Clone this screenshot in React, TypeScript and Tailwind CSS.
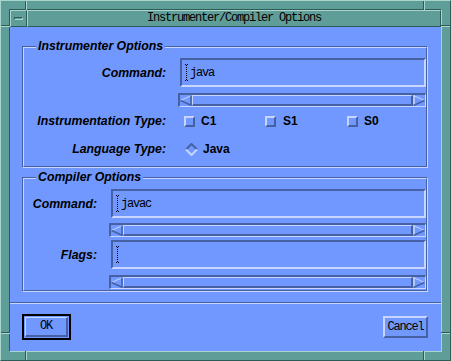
import React from 'react';

const label = "font-['Liberation_Sans',Arial,sans-serif] font-bold italic text-[12.3px] leading-[14px] text-black text-right";
const mono = "font-['Liberation_Mono','DejaVu_Sans_Mono',monospace] text-[12px] tracking-[-1.2px] text-black";
const optText = "font-['Liberation_Sans',Arial,sans-serif] font-bold text-[12px] leading-[14px] text-black";

function Cursor() {
  const dots: [number, number][] = [[1, 0], [3, 0], [2, 1]];
  for (let y = 3; y <= 13; y += 2) dots.push([2, y]);
  dots.push([2, 15], [1, 16], [3, 16]);
  return (
    <svg width="5" height="17" className="shrink-0">
      {dots.map(([x, y], i) => (
        <rect key={i} x={x} y={y} width="1" height="1" fill="#000" />
      ))}
    </svg>
  );
}

function Field({ text }: { text?: string }) {
  return (
    <div className="flex-1 h-[29px] flex items-center pl-[2px] border-2 border-t-[#4561a3] border-l-[#4561a3] border-b-[#c8d6ff] border-r-[#c8d6ff]">
      <Cursor />
      {text ? <span className={`${mono} ml-[1px] leading-[14px]`}>{text}</span> : null}
    </div>
  );
}

function ArrowLeft() {
  return (
    <svg width="12" height="11" className="shrink-0">
      <polygon points="0.5,5.5 11.5,0.5 11.5,10.5" fill="#7098ff" />
      <line x1="0.5" y1="5.5" x2="11.5" y2="0.5" stroke="#c8d6ff" strokeWidth="1" />
      <line x1="0.5" y1="5.5" x2="11.5" y2="10.5" stroke="#4561a3" strokeWidth="1.5" />
      <line x1="11" y1="0.5" x2="11" y2="10.5" stroke="#4561a3" strokeWidth="1.5" />
    </svg>
  );
}

function ArrowRight() {
  return (
    <svg width="12" height="11" className="shrink-0">
      <polygon points="0.5,0.5 11.5,5.5 0.5,10.5" fill="#7098ff" />
      <line x1="0.5" y1="0.5" x2="11.5" y2="5.5" stroke="#c8d6ff" strokeWidth="1" />
      <line x1="1" y1="0.5" x2="1" y2="10.5" stroke="#c8d6ff" strokeWidth="1.5" />
      <line x1="0.5" y1="10.5" x2="11.5" y2="5.5" stroke="#4561a3" strokeWidth="1.5" />
    </svg>
  );
}

function Scrollbar({ className }: { className: string }) {
  return (
    <div className={`h-[14px] flex items-stretch border-t-2 border-l-2 border-b border-r border-t-[#4561a3] border-l-[#4561a3] border-b-[#c8d6ff] border-r-[#c8d6ff] ${className}`}>
      <div className="flex items-center"><ArrowLeft /></div>
      <div className="flex-1 border-t border-l border-b-2 border-r-2 border-t-[#c8d6ff] border-l-[#c8d6ff] border-b-[#4561a3] border-r-[#4561a3]" />
      <div className="flex items-center"><ArrowRight /></div>
    </div>
  );
}

function CheckBox() {
  return (
    <div className="w-[11px] h-[11px] shrink-0 border-2 border-t-[#c8d6ff] border-l-[#c8d6ff] border-b-[#4561a3] border-r-[#4561a3] bg-[#7098ff]" />
  );
}

function Diamond() {
  return (
    <svg width="13" height="13" className="shrink-0">
      <polygon points="6.5,1 12,6.5 6.5,12 1,6.5" fill="#7098ff" />
      <polyline points="1,6.5 6.5,1 12,6.5" fill="none" stroke="#4561a3" strokeWidth="2" />
      <polyline points="1,6.5 6.5,12 12,6.5" fill="none" stroke="#c8d6ff" strokeWidth="2" />
    </svg>
  );
}

function Frame({ title, h, children }: { title: string; h: string; children: React.ReactNode }) {
  return (
    <div className={`relative ${h} border border-t-[#4561a3] border-l-[#4561a3] border-b-[#c8d6ff] border-r-[#c8d6ff]`}>
      <div className="h-full flex flex-col border border-t-[#c8d6ff] border-l-[#c8d6ff] border-b-[#4561a3] border-r-[#4561a3]">
        {children}
      </div>
      <span className={`absolute top-[-8px] left-[13px] px-[2px] bg-[#7098ff] ${label} text-left`}>{title}</span>
    </div>
  );
}

function Sep({ className }: { className: string }) {
  return <span className={`absolute ${className}`} />;
}

export default function App() {
  return (
    <div className="relative w-[451px] h-[361px] bg-[#5f9e98] border-t border-l border-b border-r border-t-[#a9d5cd] border-l-[#a9d5cd] border-b-[#2f5c57] border-r-[#2f5c57] p-[8px]">
      {/* resize corner separators */}
      <Sep className="left-[24px] top-0 w-[1px] h-[9px] bg-[#2f5c57]" />
      <Sep className="left-[25px] top-0 w-[1px] h-[9px] bg-[#a9d5cd]" />
      <Sep className="left-0 top-[24px] w-[9px] h-[1px] bg-[#2f5c57]" />
      <Sep className="left-0 top-[25px] w-[9px] h-[1px] bg-[#a9d5cd]" />
      <Sep className="left-[422px] top-0 w-[1px] h-[9px] bg-[#2f5c57]" />
      <Sep className="left-[423px] top-0 w-[1px] h-[9px] bg-[#a9d5cd]" />
      <Sep className="right-0 top-[24px] w-[9px] h-[1px] bg-[#2f5c57]" />
      <Sep className="right-0 top-[25px] w-[9px] h-[1px] bg-[#a9d5cd]" />
      <Sep className="left-0 top-[331px] w-[9px] h-[1px] bg-[#2f5c57]" />
      <Sep className="left-0 top-[332px] w-[9px] h-[1px] bg-[#a9d5cd]" />
      <Sep className="right-0 top-[331px] w-[9px] h-[1px] bg-[#2f5c57]" />
      <Sep className="right-0 top-[332px] w-[9px] h-[1px] bg-[#a9d5cd]" />
      <Sep className="left-[24px] bottom-0 w-[1px] h-[9px] bg-[#2f5c57]" />
      <Sep className="left-[25px] bottom-0 w-[1px] h-[9px] bg-[#a9d5cd]" />
      <Sep className="left-[422px] bottom-0 w-[1px] h-[9px] bg-[#2f5c57]" />
      <Sep className="left-[423px] bottom-0 w-[1px] h-[9px] bg-[#a9d5cd]" />

      <div className="h-full flex flex-col border border-t-[#2f5c57] border-l-[#2f5c57] border-b-[#a9d5cd] border-r-[#a9d5cd]">
        {/* title bar */}
        <div className="flex h-[17px] shrink-0">
          <div className="w-[17px] h-[17px] flex items-center justify-center border border-t-[#a9d5cd] border-l-[#a9d5cd] border-b-[#2f5c57] border-r-[#2f5c57]">
            <div className="w-[9px] h-[3px] border border-t-[#2f5c57] border-l-[#2f5c57] border-b-[#a9d5cd] border-r-[#a9d5cd]" />
          </div>
          <div className="flex-1 flex items-center justify-center border border-t-[#a9d5cd] border-l-[#a9d5cd] border-b-[#2f5c57] border-r-[#2f5c57]">
            <span className={`${mono} leading-[13px]`}>Instrumenter/Compiler Options</span>
          </div>
        </div>

        {/* client */}
        <div className="flex-1 bg-[#7098ff] pt-[19px] pl-[12px] pr-[13px] flex flex-col">
          <Frame title="Instrumenter Options" h="h-[122px]">
            <div className="flex h-[29px] mt-[10px]">
              <span className={`${label} w-[142px] self-center`}>Command:</span>
              <div className="ml-[14px] flex-1 flex">
                <Field text="java" />
              </div>
            </div>
            <Scrollbar className="mt-[6px] ml-[154px]" />
            <div className="flex items-center h-[14px] mt-[7px]">
              <span className={`${label} w-[142px]`}>Instrumentation Type:</span>
              <div className="ml-[18px] flex items-center">
                <div className="w-[81px] flex items-center">
                  <CheckBox />
                  <span className={`${optText} ml-[6px]`}>C1</span>
                </div>
                <div className="w-[82px] flex items-center">
                  <CheckBox />
                  <span className={`${optText} ml-[7px] text-[#33477a]`}>S1</span>
                </div>
                <div className="flex items-center">
                  <CheckBox />
                  <span className={`${optText} ml-[6px]`}>S0</span>
                </div>
              </div>
            </div>
            <div className="flex items-center h-[14px] mt-[14px]">
              <span className={`${label} w-[142px]`}>Language Type:</span>
              <div className="ml-[19px] flex items-center">
                <Diamond />
                <span className={`${optText} ml-[5px]`}>Java</span>
              </div>
            </div>
          </Frame>

          <div className="mt-[9px]">
            <Frame title="Compiler Options" h="h-[115px]">
              <div className="flex h-[29px] mt-[10px]">
                <span className={`${label} w-[73px] self-center`}>Command:</span>
                <div className="ml-[14px] flex-1 flex">
                  <Field text="javac" />
                </div>
              </div>
              <Scrollbar className="mt-[5px] ml-[85px]" />
              <div className="flex h-[29px] mt-[3px]">
                <span className={`${label} w-[73px] self-center`}>Flags:</span>
                <div className="ml-[14px] flex-1 flex">
                  <Field />
                </div>
              </div>
              <Scrollbar className="mt-[6px] ml-[85px]" />
            </Frame>
          </div>

          <div className="mt-[10px] -ml-[12px] -mr-[13px] h-[2px] border-t border-b border-t-[#4561a3] border-b-[#c8d6ff]" />

          <div className="mt-[10px] flex items-center justify-between">
            <div className="w-[49px] h-[26px] border-2 border-black p-[1px]">
              <div className="h-full flex items-center justify-center border-t border-l border-b-2 border-r-2 border-t-[#c8d6ff] border-l-[#c8d6ff] border-b-[#4561a3] border-r-[#4561a3]">
                <span className={`${mono} leading-[13px]`}>OK</span>
              </div>
            </div>
            <div className="w-[45px] h-[22px] flex items-center justify-center border-2 border-t-[#c8d6ff] border-l-[#c8d6ff] border-b-[#4561a3] border-r-[#4561a3]">
              <span className={`${mono} leading-[13px]`}>Cancel</span>
            </div>
          </div>
        </div>
      </div>
    </div>
  );
}
